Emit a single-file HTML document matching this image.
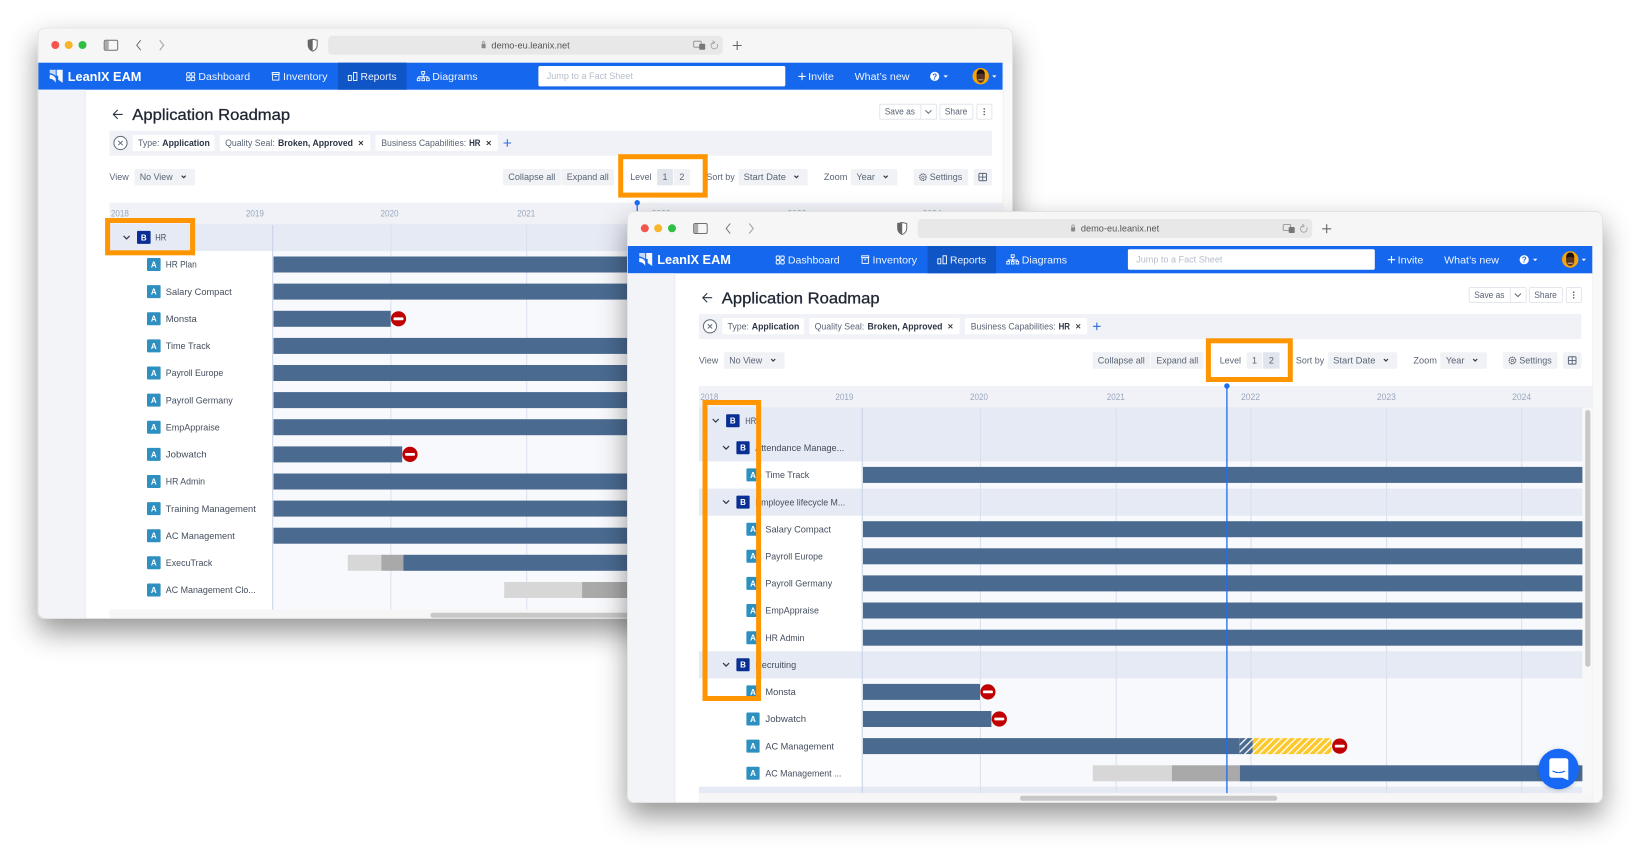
<!DOCTYPE html>
<html lang="en">
<head>
<meta charset="utf-8">
<title>Application Roadmap</title>
<style>
html,body{margin:0;padding:0;background:#fff;width:1640px;height:855px;overflow:hidden}
svg{display:block;filter:blur(.35px)}
text{font-family:"Liberation Sans",sans-serif;font-size:9.3px;fill:#4a5464}
.nav{fill:#fff;font-size:10px;opacity:.93}
.logo{fill:#fff;font-size:13px;font-weight:bold}
.ttl{fill:#1f2733;stroke:#1f2733;stroke-width:.3px;font-size:15.5px}
.b{font-weight:bold;fill:#2c3545;font-size:9px}
.s{fill:#5a6475;font-size:9px}
.yr{fill:#9aa7bd;font-size:9px}
.url{fill:#555;font-size:9.5px}
.ph{fill:#b5bdcb;font-size:9px}
.ic{fill:#fff;font-size:8px;font-weight:bold;text-anchor:middle}
.lb{fill:#444e5e;font-size:9.2px}
.ch{fill:none;stroke:#2d3748;stroke-width:1.2}
.wi{fill:none;stroke:#fff;stroke-width:.9}
.tb{fill:none;stroke:#6f6f6f;stroke-width:1}
</style>
</head>
<body>
<svg width="1640" height="855" viewBox="0 0 1640 855" xmlns="http://www.w3.org/2000/svg">
<defs>
<filter id="sh" x="-10%" y="-10%" width="120%" height="125%"><feDropShadow dx="0" dy="13" stdDeviation="14" flood-color="#000" flood-opacity=".42"/></filter>
<filter id="sh2" x="-30%" y="-30%" width="160%" height="160%"><feDropShadow dx="0" dy="1" stdDeviation="2" flood-color="#000" flood-opacity=".2"/></filter>
<clipPath id="c1"><rect width="975" height="591" rx="7"/></clipPath>
<clipPath id="c2"><rect width="975.5" height="592" rx="7"/></clipPath>
<pattern id="hy" width="5" height="5" patternUnits="userSpaceOnUse" patternTransform="rotate(45)"><rect width="5" height="5" fill="#fbc92e"/><rect width="1.3" height="5" fill="#fff"/></pattern>
<pattern id="hb" width="5" height="5" patternUnits="userSpaceOnUse" patternTransform="rotate(45)"><rect width="5" height="5" fill="#4a6a90"/><rect width="1.3" height="5" fill="#fff"/></pattern>
</defs>

<!-- WINDOW 1 -->
<g transform="translate(37.7,27.7)">
<rect width="975" height="591" rx="7" fill="#fff" filter="url(#sh)"/>
<g clip-path="url(#c1)">
<rect width="975" height="591" fill="#fff"/>
<rect width="975" height="35" fill="#f6f6f6"/>
<circle cx="17.6" cy="17.3" r="4" fill="#f4564e"/><circle cx="31" cy="17.3" r="4" fill="#fbb52d"/><circle cx="44.8" cy="17.3" r="4" fill="#2fc043"/>
<rect x="66.5" y="12.5" width="13.5" height="10" rx="1.5" class="tb"/><rect x="67" y="13" width="4" height="9" fill="#aaa"/>
<path d="M103,12.5 L99,17.5 L103,22.5" class="tb" stroke-width="1.2"/><path d="M122,12.5 L126,17.5 L122,22.5" fill="none" stroke="#aaa" stroke-width="1.2"/>
<path d="M270.5,12.5 L275,11.5 L279.5,12.5 L279.5,18 Q279,22 275,23.5 Q271,22 270.5,18 Z" fill="#fff" stroke="#666"/><path d="M270.5,12.5 L275,11.5 L275,23.5 Q271,22 270.5,18 Z" fill="#666"/>
<rect x="290.5" y="8" width="394.5" height="19" rx="4" fill="#e8e8e8"/>
<rect x="443.9" y="16.2" width="4" height="4.3" rx=".6" fill="#888"/><path d="M444.7,16.2 v-1.2 a1.2,1.2 0 0 1 2.4,0 v1.2" fill="none" stroke="#888" stroke-width=".7"/>
<text class="url" x="453.7" y="20.6" textLength="78.3" lengthAdjust="spacingAndGlyphs">demo-eu.leanix.net</text>
<rect x="656" y="13.5" width="7.5" height="6" rx="1" fill="#e8e8e8" stroke="#888" stroke-width=".8"/><rect x="661.5" y="16" width="6" height="6" rx="1" fill="#777"/>
<path d="M679.5,16.3 A3.3,3.3 0 1 1 675.5,14.8 M675,13 L677,14.8 L675,16.3" fill="none" stroke="#999" stroke-width=".8"/>
<path d="M699.5,13.3 v9 M695,17.8 h9" stroke="#666" stroke-width="1.1"/>

<rect y="35" width="965" height="27" fill="#1567ee"/>
<rect x="300.3" y="35" width="68.6" height="27" fill="#0f55c5"/>
<path d="M12,42 H18 V48 Q14.5,45.5 12,45.5 Z" fill="#fff" opacity=".75"/><path d="M19,42 H25 V55 L20.5,52 V48 H19 Z" fill="#fff" opacity=".95"/><path d="M12,47 Q16,47 18,50.5 V55 Q16,51 12,51 Z" fill="#fff"/>
<text class="logo" x="30" y="53.2" textLength="73.7" lengthAdjust="spacingAndGlyphs">LeanIX EAM</text>
<g class="wi"><rect x="149" y="45" width="3.4" height="3.4" rx=".6"/><rect x="153.6" y="45" width="3.4" height="3.4" rx=".6"/><rect x="149" y="49.6" width="3.4" height="3.4" rx=".6"/><rect x="153.6" y="49.6" width="3.4" height="3.4" rx=".6"/>
<rect x="234.5" y="44.8" width="7" height="1.8"/><rect x="234.9" y="46.8" width="6.3" height="5.6"/><path d="M237,48.8 h2"/>
<rect x="310.6" y="47.8" width="3" height="5"/><rect x="315.8" y="44.8" width="3.4" height="8"/>
<rect x="384" y="43.8" width="3" height="2.6"/><path d="M385.5,46.4 V49 M381,50.3 V49 H390.2 V50.3 M385.5,49 V50.3"/><rect x="379.6" y="50.4" width="2.6" height="2.6"/><rect x="384.2" y="50.4" width="2.6" height="2.6"/><rect x="388.9" y="50.4" width="2.6" height="2.6"/></g>
<text class="nav" x="160.7" y="52.3" textLength="51.7" lengthAdjust="spacingAndGlyphs">Dashboard</text>
<text class="nav" x="245.3" y="52.3" textLength="44.6" lengthAdjust="spacingAndGlyphs">Inventory</text>
<text class="nav" x="322.8" y="52.3" textLength="36.1" lengthAdjust="spacingAndGlyphs">Reports</text>
<text class="nav" x="394.6" y="52.3" textLength="45.3" lengthAdjust="spacingAndGlyphs">Diagrams</text>
<rect x="500.7" y="38.3" width="246.9" height="20.4" rx="1.5" fill="#fff"/>
<text class="ph" x="509" y="51.3" textLength="86.2" lengthAdjust="spacingAndGlyphs">Jump to a Fact Sheet</text>
<path d="M764.3,45 v7.4 M760.6,48.7 h7.4" stroke="#fff" stroke-width="1.1"/>
<text class="nav" x="770.4" y="52.3" textLength="25.8" lengthAdjust="spacingAndGlyphs">Invite</text>
<text class="nav" x="816.9" y="52.3" textLength="54.9" lengthAdjust="spacingAndGlyphs">What’s new</text>
<circle cx="897" cy="48.7" r="4.6" fill="#fff"/><text x="897" y="51.7" style="font-size:8px;font-weight:bold;fill:#1567ee;text-anchor:middle">?</text>
<path d="M905.8,47.7 h4.4 l-2.2,2.4 z" fill="#fff"/>
<circle cx="943" cy="48.5" r="8.2" fill="#f5a50a"/><ellipse cx="943" cy="49" rx="4.2" ry="6" fill="#5a3320"/><path d="M938.8,47 Q939,41.5 943,41.5 Q947,41.5 947.2,47 Q943,44.5 938.8,47 Z" fill="#1d120d"/><path d="M940.5,52.2 h5" stroke="#e8d6c8" stroke-width=".8"/>
<path d="M954.4,47.7 h4.4 l-2.2,2.4 z" fill="#fff"/>

<rect y="62" width="47" height="529" fill="#f2f4f8"/><rect x="47" y="62" width="1" height="529" fill="#e6e9f0"/>
<rect x="965" y="35" width="10" height="556" fill="#f9f9f9"/><rect x="965" y="35" width=".7" height="556" fill="#eee"/>

<path d="M85,86.7 H76 M80,82.2 L75.6,86.7 L80,91.2" fill="none" stroke="#2d3644" stroke-width="1.1"/>
<text class="ttl" x="94.6" y="92.3" textLength="157.8" lengthAdjust="spacingAndGlyphs">Application Roadmap</text>
<rect x="842" y="76.5" width="57" height="15" rx="1.5" fill="#fff" stroke="#e3e6ec"/><path d="M883.1,76.5 v15" stroke="#e3e6ec"/>
<text class="s" x="847" y="87" textLength="30.3" lengthAdjust="spacingAndGlyphs">Save as</text>
<path d="M887.7,82.6 L890.7,85.6 L893.7,82.6" fill="none" stroke="#5a6475"/>
<rect x="902.2" y="76.5" width="33" height="15" rx="1.5" fill="#fff" stroke="#e3e6ec"/>
<text class="s" x="907" y="87" textLength="22.7" lengthAdjust="spacingAndGlyphs">Share</text>
<rect x="939.2" y="76.5" width="15" height="15" rx="1.5" fill="#fff" stroke="#e3e6ec"/>
<circle cx="946.5" cy="81.2" r=".8" fill="#555"/><circle cx="946.5" cy="84" r=".8" fill="#555"/><circle cx="946.5" cy="86.8" r=".8" fill="#555"/>

<rect x="71.7" y="103" width="882.5" height="25" rx="1" fill="#f0f2f7"/>
<circle cx="82.8" cy="115.3" r="6.6" fill="#fff" stroke="#5f6b7c"/><path d="M80.6,113.1 l4.4,4.4 M85,113.1 l-4.4,4.4" stroke="#5f6b7c"/>
<rect x="95" y="107.3" width="81.7" height="16" rx="1" fill="#fff"/>
<text class="s" x="100.3" y="118.5" textLength="21.5" lengthAdjust="spacingAndGlyphs">Type:</text>
<text class="b" x="124.6" y="118.5" textLength="47.5" lengthAdjust="spacingAndGlyphs">Application</text>
<rect x="182.1" y="107.3" width="150.3" height="16" rx="1" fill="#fff"/>
<text class="s" x="187.4" y="118.5" textLength="49.7" lengthAdjust="spacingAndGlyphs">Quality Seal:</text>
<text class="b" x="240.3" y="118.5" textLength="75" lengthAdjust="spacingAndGlyphs">Broken, Approved</text>
<path d="M321.2,113.3 l4,4 M325.2,113.3 l-4,4" stroke="#333" stroke-width="1"/>
<rect x="337.8" y="107.3" width="122.2" height="16" rx="1" fill="#fff"/>
<text class="s" x="343.5" y="118.5" textLength="85" lengthAdjust="spacingAndGlyphs">Business Capabilities:</text>
<text class="b" x="431.4" y="118.5" textLength="11.4" lengthAdjust="spacingAndGlyphs">HR</text>
<path d="M449,113.3 l4,4 M453,113.3 l-4,4" stroke="#333" stroke-width="1"/>
<path d="M469.6,111.5 v7.6 M465.8,115.3 h7.6" stroke="#2a6fe0" stroke-width="1.1"/>

<text class="s" x="71.7" y="152.5" textLength="19.3" lengthAdjust="spacingAndGlyphs">View</text>
<rect x="96.7" y="141.3" width="60.7" height="16.4" rx="1.5" fill="#f0f2f5"/>
<text class="s" x="102.1" y="152.5" textLength="32.8" lengthAdjust="spacingAndGlyphs">No View</text>
<path d="M144,148 L146,150 L148,148" class="ch"/>
<rect x="465.3" y="141.3" width="57.8" height="16.4" rx="1" fill="#f0f2f5"/><rect x="523.8" y="141.3" width="52.4" height="16.4" rx="1" fill="#f0f2f5"/>
<text class="s" x="470.6" y="152.5" textLength="47" lengthAdjust="spacingAndGlyphs">Collapse all</text>
<text class="s" x="529" y="152.5" textLength="42.1" lengthAdjust="spacingAndGlyphs">Expand all</text>
<text class="s" x="668.7" y="152.5" textLength="28.3" lengthAdjust="spacingAndGlyphs">Sort by</text>
<rect x="700.7" y="141.3" width="69.3" height="16.4" rx="1.5" fill="#f0f2f5"/>
<text class="s" x="705.9" y="152.5" textLength="42.4" lengthAdjust="spacingAndGlyphs">Start Date</text>
<path d="M756.7,148 L758.7,150 L760.7,148" class="ch"/>
<text class="s" x="786.2" y="152.5" textLength="23.5" lengthAdjust="spacingAndGlyphs">Zoom</text>
<rect x="813.1" y="141.3" width="46.6" height="16.4" rx="1.5" fill="#f0f2f5"/>
<text class="s" x="818.7" y="152.5" textLength="18.6" lengthAdjust="spacingAndGlyphs">Year</text>
<path d="M846,148 L848,150 L850,148" class="ch"/>
<rect x="875.9" y="141.3" width="54.5" height="16.4" rx="1.5" fill="#f0f2f5"/>
<circle cx="885.2" cy="149.5" r="3.2" fill="none" stroke="#5a6475" stroke-width="1.3" stroke-dasharray="1.2 .6"/><circle cx="885.2" cy="149.5" r="1.2" fill="none" stroke="#5a6475" stroke-width=".6"/>
<text class="s" x="892.1" y="152.5" textLength="32.4" lengthAdjust="spacingAndGlyphs">Settings</text>
<rect x="935.9" y="141.3" width="18.3" height="16.4" rx="1.5" fill="#f0f2f5"/>
<rect x="941.2" y="145.7" width="7.6" height="7.4" rx="1" fill="none" stroke="#5a6475"/><path d="M945,145.7 v7.4 M941.2,149.4 h7.6" stroke="#5a6475" stroke-width=".9"/>

<rect x="71.7" y="175" width="893" height="22.3" fill="#f0f2f7"/>
<text class="yr" x="73.2" y="189" textLength="18" lengthAdjust="spacingAndGlyphs">2018</text>
<text class="yr" x="208.2" y="189" textLength="18" lengthAdjust="spacingAndGlyphs">2019</text>
<text class="yr" x="342.8" y="189" textLength="18" lengthAdjust="spacingAndGlyphs">2020</text>
<text class="yr" x="479.6" y="189" textLength="18" lengthAdjust="spacingAndGlyphs">2021</text>
<text class="yr" x="613.8" y="189" textLength="19" lengthAdjust="spacingAndGlyphs">2022</text>
<text class="yr" x="749.7" y="189" textLength="19" lengthAdjust="spacingAndGlyphs">2023</text>
<text class="yr" x="884.9" y="189" textLength="19" lengthAdjust="spacingAndGlyphs">2024</text>

<rect x="235" y="197.3" width="720" height="384.5" fill="#f8f9fc"/>
<rect x="71.7" y="196.2" width="883.3" height="27.1" fill="#e6eaf4"/>
<path d="M353.2,197.3 V581.8 M489,197.3 V581.8 M623.8,197.3 V581.8 M759.4,197.3 V581.8 M894.5,197.3 V581.8" stroke="#d8e0ed" stroke-width="1"/>
<path d="M235,197.3 V581.8" stroke="#c5d1e4" stroke-width="1"/>
<g fill="#4a6a90">
<rect x="235.8" y="228.8" width="720" height="16"/>
<rect x="235.8" y="255.9" width="720" height="16"/>
<rect x="235.8" y="283.1" width="117.2" height="16"/>
<rect x="235.8" y="310.2" width="720" height="16"/>
<rect x="235.8" y="337.3" width="720" height="16"/>
<rect x="235.8" y="364.4" width="720" height="16"/>
<rect x="235.8" y="391.5" width="720" height="16"/>
<rect x="235.8" y="418.7" width="128.7" height="16"/>
<rect x="235.8" y="445.8" width="720" height="16"/>
<rect x="235.8" y="472.9" width="720" height="16"/>
<rect x="235.8" y="500" width="720" height="16"/>
<rect x="365.5" y="527.1" width="590" height="16"/>
</g>
<rect x="310.1" y="527.1" width="33.5" height="16" fill="#d7d7d7"/><rect x="343.6" y="527.1" width="21.9" height="16" fill="#a9a9a9"/>
<rect x="466.5" y="554.3" width="77.9" height="16" fill="#d7d7d7"/><rect x="544.4" y="554.3" width="68" height="16" fill="#a9a9a9"/>
<circle cx="360.8" cy="291.1" r="7.6" fill="#c00000"/><rect x="355.8" y="289.7" width="10" height="2.8" rx="1" fill="#fff"/>
<circle cx="372.3" cy="426.7" r="7.6" fill="#c00000"/><rect x="367.3" y="425.3" width="10" height="2.8" rx="1" fill="#fff"/>
<path d="M599.5,175 V582" stroke="#1c6ef2" stroke-width="1.3"/><circle cx="599.5" cy="175" r="2.7" fill="#1c6ef2"/>

<path d="M85.9,208.2 L88.9,211.2 L91.9,208.2" class="ch"/>
<rect x="99.3" y="203.2" width="13.6" height="13" rx="1" fill="#0a2f94"/><text class="ic" x="106.1" y="212.6">B</text>
<text class="lb" x="117.6" y="212.9" textLength="11" lengthAdjust="spacingAndGlyphs">HR</text>
<g fill="#2e8fc1">
<rect x="109.3" y="230.3" width="13.6" height="13" rx="1"/><rect x="109.3" y="257.4" width="13.6" height="13" rx="1"/><rect x="109.3" y="284.6" width="13.6" height="13" rx="1"/><rect x="109.3" y="311.7" width="13.6" height="13" rx="1"/><rect x="109.3" y="338.8" width="13.6" height="13" rx="1"/><rect x="109.3" y="365.9" width="13.6" height="13" rx="1"/><rect x="109.3" y="393" width="13.6" height="13" rx="1"/><rect x="109.3" y="420.2" width="13.6" height="13" rx="1"/><rect x="109.3" y="447.3" width="13.6" height="13" rx="1"/><rect x="109.3" y="474.4" width="13.6" height="13" rx="1"/><rect x="109.3" y="501.5" width="13.6" height="13" rx="1"/><rect x="109.3" y="528.6" width="13.6" height="13" rx="1"/><rect x="109.3" y="555.8" width="13.6" height="13" rx="1"/>
</g>
<text class="ic" x="116.1" y="239.7">A</text><text class="ic" x="116.1" y="266.8">A</text><text class="ic" x="116.1" y="294">A</text><text class="ic" x="116.1" y="321.1">A</text><text class="ic" x="116.1" y="348.2">A</text><text class="ic" x="116.1" y="375.3">A</text><text class="ic" x="116.1" y="402.4">A</text><text class="ic" x="116.1" y="429.6">A</text><text class="ic" x="116.1" y="456.7">A</text><text class="ic" x="116.1" y="483.8">A</text><text class="ic" x="116.1" y="510.9">A</text><text class="ic" x="116.1" y="538">A</text><text class="ic" x="116.1" y="565.2">A</text>
<text class="lb" x="128.1" y="240" textLength="30.9" lengthAdjust="spacingAndGlyphs">HR Plan</text>
<text class="lb" x="128.1" y="267.1" textLength="65.9" lengthAdjust="spacingAndGlyphs">Salary Compact</text>
<text class="lb" x="128.1" y="294.3" textLength="30.9" lengthAdjust="spacingAndGlyphs">Monsta</text>
<text class="lb" x="128.1" y="321.4" textLength="44.5" lengthAdjust="spacingAndGlyphs">Time Track</text>
<text class="lb" x="128.1" y="348.5" textLength="57.5" lengthAdjust="spacingAndGlyphs">Payroll Europe</text>
<text class="lb" x="128.1" y="375.6" textLength="67" lengthAdjust="spacingAndGlyphs">Payroll Germany</text>
<text class="lb" x="128.1" y="402.7" textLength="53.9" lengthAdjust="spacingAndGlyphs">EmpAppraise</text>
<text class="lb" x="128.1" y="429.9" textLength="40.8" lengthAdjust="spacingAndGlyphs">Jobwatch</text>
<text class="lb" x="128.1" y="457" textLength="39.2" lengthAdjust="spacingAndGlyphs">HR Admin</text>
<text class="lb" x="128.1" y="484.1" textLength="90" lengthAdjust="spacingAndGlyphs">Training Management</text>
<text class="lb" x="128.1" y="511.2" textLength="69" lengthAdjust="spacingAndGlyphs">AC Management</text>
<text class="lb" x="128.1" y="538.3" textLength="46.5" lengthAdjust="spacingAndGlyphs">ExecuTrack</text>
<text class="lb" x="128.1" y="565.5" textLength="90" lengthAdjust="spacingAndGlyphs">AC Management Clo...</text>
<rect x="71.7" y="581.8" width="893" height="9.2" fill="#f6f6f6"/>
<rect x="392.7" y="585" width="300" height="5" rx="2.5" fill="#c8c8c8"/>

<rect x="583" y="129" width="84.5" height="38.4" fill="#fff" stroke="#ff9500" stroke-width="5"/>
<text class="s" x="592.5" y="152.5" textLength="21.3" lengthAdjust="spacingAndGlyphs">Level</text>
<rect x="619.4" y="141.3" width="15.8" height="16.4" rx="1" fill="#e1e5ec"/><rect x="635.9" y="141.3" width="16.5" height="16.4" rx="1" fill="#f0f2f5"/>
<text class="s" x="627.3" y="152.5" style="text-anchor:middle">1</text><text class="s" x="644.2" y="152.5" style="text-anchor:middle">2</text>
<rect x="69.9" y="192.8" width="85" height="32.3" fill="none" stroke="#ff9500" stroke-width="5"/>
</g>
<rect x=".35" y=".35" width="974.3" height="590.3" rx="7" fill="none" stroke="#dcdcdc" stroke-width=".7"/>
</g>

<!-- WINDOW 2 -->
<g transform="translate(627.2,211)">
<rect width="975.5" height="592" rx="7" fill="#fff" filter="url(#sh)"/>
<g clip-path="url(#c2)">
<rect width="975.5" height="592" fill="#fff"/>
<rect width="975.5" height="35" fill="#f6f6f6"/>
<circle cx="17.6" cy="17.3" r="4" fill="#f4564e"/><circle cx="31" cy="17.3" r="4" fill="#fbb52d"/><circle cx="44.8" cy="17.3" r="4" fill="#2fc043"/>
<rect x="66.5" y="12.5" width="13.5" height="10" rx="1.5" class="tb"/><rect x="67" y="13" width="4" height="9" fill="#aaa"/>
<path d="M103,12.5 L99,17.5 L103,22.5" class="tb" stroke-width="1.2"/><path d="M122,12.5 L126,17.5 L122,22.5" fill="none" stroke="#aaa" stroke-width="1.2"/>
<path d="M270.5,12.5 L275,11.5 L279.5,12.5 L279.5,18 Q279,22 275,23.5 Q271,22 270.5,18 Z" fill="#fff" stroke="#666"/><path d="M270.5,12.5 L275,11.5 L275,23.5 Q271,22 270.5,18 Z" fill="#666"/>
<rect x="290.5" y="8" width="394.5" height="19" rx="4" fill="#e8e8e8"/>
<rect x="443.9" y="16.2" width="4" height="4.3" rx=".6" fill="#888"/><path d="M444.7,16.2 v-1.2 a1.2,1.2 0 0 1 2.4,0 v1.2" fill="none" stroke="#888" stroke-width=".7"/>
<text class="url" x="453.7" y="20.6" textLength="78.3" lengthAdjust="spacingAndGlyphs">demo-eu.leanix.net</text>
<rect x="656" y="13.5" width="7.5" height="6" rx="1" fill="#e8e8e8" stroke="#888" stroke-width=".8"/><rect x="661.5" y="16" width="6" height="6" rx="1" fill="#777"/>
<path d="M679.5,16.3 A3.3,3.3 0 1 1 675.5,14.8 M675,13 L677,14.8 L675,16.3" fill="none" stroke="#999" stroke-width=".8"/>
<path d="M699.5,13.3 v9 M695,17.8 h9" stroke="#666" stroke-width="1.1"/>

<rect y="35" width="965.2" height="27.3" fill="#1567ee"/>
<rect x="300.3" y="35" width="68.6" height="27.3" fill="#0f55c5"/>
<path d="M12,42 H18 V48 Q14.5,45.5 12,45.5 Z" fill="#fff" opacity=".75"/><path d="M19,42 H25 V55 L20.5,52 V48 H19 Z" fill="#fff" opacity=".95"/><path d="M12,47 Q16,47 18,50.5 V55 Q16,51 12,51 Z" fill="#fff"/>
<text class="logo" x="30" y="53.2" textLength="73.7" lengthAdjust="spacingAndGlyphs">LeanIX EAM</text>
<g class="wi"><rect x="149" y="45" width="3.4" height="3.4" rx=".6"/><rect x="153.6" y="45" width="3.4" height="3.4" rx=".6"/><rect x="149" y="49.6" width="3.4" height="3.4" rx=".6"/><rect x="153.6" y="49.6" width="3.4" height="3.4" rx=".6"/>
<rect x="234.5" y="44.8" width="7" height="1.8"/><rect x="234.9" y="46.8" width="6.3" height="5.6"/><path d="M237,48.8 h2"/>
<rect x="310.6" y="47.8" width="3" height="5"/><rect x="315.8" y="44.8" width="3.4" height="8"/>
<rect x="384" y="43.8" width="3" height="2.6"/><path d="M385.5,46.4 V49 M381,50.3 V49 H390.2 V50.3 M385.5,49 V50.3"/><rect x="379.6" y="50.4" width="2.6" height="2.6"/><rect x="384.2" y="50.4" width="2.6" height="2.6"/><rect x="388.9" y="50.4" width="2.6" height="2.6"/></g>
<text class="nav" x="160.7" y="52.3" textLength="51.7" lengthAdjust="spacingAndGlyphs">Dashboard</text>
<text class="nav" x="245.3" y="52.3" textLength="44.6" lengthAdjust="spacingAndGlyphs">Inventory</text>
<text class="nav" x="322.8" y="52.3" textLength="36.1" lengthAdjust="spacingAndGlyphs">Reports</text>
<text class="nav" x="394.6" y="52.3" textLength="45.3" lengthAdjust="spacingAndGlyphs">Diagrams</text>
<rect x="500.7" y="38.3" width="246.9" height="20.4" rx="1.5" fill="#fff"/>
<text class="ph" x="509" y="51.3" textLength="86.2" lengthAdjust="spacingAndGlyphs">Jump to a Fact Sheet</text>
<path d="M764.3,45 v7.4 M760.6,48.7 h7.4" stroke="#fff" stroke-width="1.1"/>
<text class="nav" x="770.4" y="52.3" textLength="25.8" lengthAdjust="spacingAndGlyphs">Invite</text>
<text class="nav" x="816.9" y="52.3" textLength="54.9" lengthAdjust="spacingAndGlyphs">What’s new</text>
<circle cx="897" cy="48.7" r="4.6" fill="#fff"/><text x="897" y="51.7" style="font-size:8px;font-weight:bold;fill:#1567ee;text-anchor:middle">?</text>
<path d="M905.8,47.7 h4.4 l-2.2,2.4 z" fill="#fff"/>
<circle cx="943" cy="48.5" r="8.2" fill="#f5a50a"/><ellipse cx="943" cy="49" rx="4.2" ry="6" fill="#5a3320"/><path d="M938.8,47 Q939,41.5 943,41.5 Q947,41.5 947.2,47 Q943,44.5 938.8,47 Z" fill="#1d120d"/><path d="M940.5,52.2 h5" stroke="#e8d6c8" stroke-width=".8"/>
<path d="M954.4,47.7 h4.4 l-2.2,2.4 z" fill="#fff"/>

<rect y="62.3" width="47" height="530" fill="#f2f4f8"/><rect x="47" y="62.3" width="1" height="530" fill="#e6e9f0"/>
<rect x="965.2" y="35" width="10.3" height="557" fill="#f9f9f9"/><rect x="965.2" y="35" width=".7" height="557" fill="#eee"/>

<path d="M85,86.7 H76 M80,82.2 L75.6,86.7 L80,91.2" fill="none" stroke="#2d3644" stroke-width="1.1"/>
<text class="ttl" x="94.6" y="92.3" textLength="157.8" lengthAdjust="spacingAndGlyphs">Application Roadmap</text>
<rect x="842" y="76.5" width="57" height="15" rx="1.5" fill="#fff" stroke="#e3e6ec"/><path d="M883.1,76.5 v15" stroke="#e3e6ec"/>
<text class="s" x="847" y="87" textLength="30.3" lengthAdjust="spacingAndGlyphs">Save as</text>
<path d="M887.7,82.6 L890.7,85.6 L893.7,82.6" fill="none" stroke="#5a6475"/>
<rect x="902.2" y="76.5" width="33" height="15" rx="1.5" fill="#fff" stroke="#e3e6ec"/>
<text class="s" x="907" y="87" textLength="22.7" lengthAdjust="spacingAndGlyphs">Share</text>
<rect x="939.2" y="76.5" width="15" height="15" rx="1.5" fill="#fff" stroke="#e3e6ec"/>
<circle cx="946.5" cy="81.2" r=".8" fill="#555"/><circle cx="946.5" cy="84" r=".8" fill="#555"/><circle cx="946.5" cy="86.8" r=".8" fill="#555"/>

<rect x="71.7" y="103" width="882.5" height="25" rx="1" fill="#f0f2f7"/>
<circle cx="82.8" cy="115.3" r="6.6" fill="#fff" stroke="#5f6b7c"/><path d="M80.6,113.1 l4.4,4.4 M85,113.1 l-4.4,4.4" stroke="#5f6b7c"/>
<rect x="95" y="107.3" width="81.7" height="16" rx="1" fill="#fff"/>
<text class="s" x="100.3" y="118.5" textLength="21.5" lengthAdjust="spacingAndGlyphs">Type:</text>
<text class="b" x="124.6" y="118.5" textLength="47.5" lengthAdjust="spacingAndGlyphs">Application</text>
<rect x="182.1" y="107.3" width="150.3" height="16" rx="1" fill="#fff"/>
<text class="s" x="187.4" y="118.5" textLength="49.7" lengthAdjust="spacingAndGlyphs">Quality Seal:</text>
<text class="b" x="240.3" y="118.5" textLength="75" lengthAdjust="spacingAndGlyphs">Broken, Approved</text>
<path d="M321.2,113.3 l4,4 M325.2,113.3 l-4,4" stroke="#333" stroke-width="1"/>
<rect x="337.8" y="107.3" width="122.2" height="16" rx="1" fill="#fff"/>
<text class="s" x="343.5" y="118.5" textLength="85" lengthAdjust="spacingAndGlyphs">Business Capabilities:</text>
<text class="b" x="431.4" y="118.5" textLength="11.4" lengthAdjust="spacingAndGlyphs">HR</text>
<path d="M449,113.3 l4,4 M453,113.3 l-4,4" stroke="#333" stroke-width="1"/>
<path d="M469.6,111.5 v7.6 M465.8,115.3 h7.6" stroke="#2a6fe0" stroke-width="1.1"/>

<text class="s" x="71.7" y="152.5" textLength="19.3" lengthAdjust="spacingAndGlyphs">View</text>
<rect x="96.7" y="141.3" width="60.7" height="16.4" rx="1.5" fill="#f0f2f5"/>
<text class="s" x="102.1" y="152.5" textLength="32.8" lengthAdjust="spacingAndGlyphs">No View</text>
<path d="M144,148 L146,150 L148,148" class="ch"/>
<rect x="465.3" y="141.3" width="57.8" height="16.4" rx="1" fill="#f0f2f5"/><rect x="523.8" y="141.3" width="52.4" height="16.4" rx="1" fill="#f0f2f5"/>
<text class="s" x="470.6" y="152.5" textLength="47" lengthAdjust="spacingAndGlyphs">Collapse all</text>
<text class="s" x="529" y="152.5" textLength="42.1" lengthAdjust="spacingAndGlyphs">Expand all</text>
<text class="s" x="668.7" y="152.5" textLength="28.3" lengthAdjust="spacingAndGlyphs">Sort by</text>
<rect x="700.7" y="141.3" width="69.3" height="16.4" rx="1.5" fill="#f0f2f5"/>
<text class="s" x="705.9" y="152.5" textLength="42.4" lengthAdjust="spacingAndGlyphs">Start Date</text>
<path d="M756.7,148 L758.7,150 L760.7,148" class="ch"/>
<text class="s" x="786.2" y="152.5" textLength="23.5" lengthAdjust="spacingAndGlyphs">Zoom</text>
<rect x="813.1" y="141.3" width="46.6" height="16.4" rx="1.5" fill="#f0f2f5"/>
<text class="s" x="818.7" y="152.5" textLength="18.6" lengthAdjust="spacingAndGlyphs">Year</text>
<path d="M846,148 L848,150 L850,148" class="ch"/>
<rect x="875.9" y="141.3" width="54.5" height="16.4" rx="1.5" fill="#f0f2f5"/>
<circle cx="885.2" cy="149.5" r="3.2" fill="none" stroke="#5a6475" stroke-width="1.3" stroke-dasharray="1.2 .6"/><circle cx="885.2" cy="149.5" r="1.2" fill="none" stroke="#5a6475" stroke-width=".6"/>
<text class="s" x="892.1" y="152.5" textLength="32.4" lengthAdjust="spacingAndGlyphs">Settings</text>
<rect x="935.9" y="141.3" width="18.3" height="16.4" rx="1.5" fill="#f0f2f5"/>
<rect x="941.2" y="145.7" width="7.6" height="7.4" rx="1" fill="none" stroke="#5a6475"/><path d="M945,145.7 v7.4 M941.2,149.4 h7.6" stroke="#5a6475" stroke-width=".9"/>

<rect x="71.7" y="175" width="893.5" height="22.3" fill="#f0f2f7"/>
<text class="yr" x="73.2" y="189" textLength="18" lengthAdjust="spacingAndGlyphs">2018</text>
<text class="yr" x="208.2" y="189" textLength="18" lengthAdjust="spacingAndGlyphs">2019</text>
<text class="yr" x="342.8" y="189" textLength="18" lengthAdjust="spacingAndGlyphs">2020</text>
<text class="yr" x="479.6" y="189" textLength="18" lengthAdjust="spacingAndGlyphs">2021</text>
<text class="yr" x="613.8" y="189" textLength="19" lengthAdjust="spacingAndGlyphs">2022</text>
<text class="yr" x="749.7" y="189" textLength="19" lengthAdjust="spacingAndGlyphs">2023</text>
<text class="yr" x="884.9" y="189" textLength="19" lengthAdjust="spacingAndGlyphs">2024</text>

<rect x="235" y="197.3" width="720.2" height="385" fill="#f8f9fc"/>
<g fill="#e6eaf4">
<rect x="71.7" y="196.2" width="883.5" height="27.1"/>
<rect x="71.7" y="223.3" width="883.5" height="27.1"/>
<rect x="71.7" y="277.6" width="883.5" height="27.1"/>
<rect x="71.7" y="440.3" width="883.5" height="27.1"/>
<rect x="71.7" y="575.7" width="883.5" height="6.6"/>
</g>
<path d="M353.2,197.3 V582.3 M489,197.3 V582.3 M623.8,197.3 V582.3 M759.4,197.3 V582.3 M894.5,197.3 V582.3" stroke="#d8e0ed" stroke-width="1"/>
<path d="M235,197.3 V582.3" stroke="#c5d1e4" stroke-width="1"/>
<rect x="955.2" y="197.3" width="10" height="385" fill="#f8f8f8"/>
<rect x="958" y="199" width="5.2" height="256.7" rx="2.6" fill="#c8c8c8"/>
<g fill="#4a6a90">
<rect x="235.8" y="255.9" width="719.4" height="16"/>
<rect x="235.8" y="310.2" width="719.4" height="16"/>
<rect x="235.8" y="337.3" width="719.4" height="16"/>
<rect x="235.8" y="364.4" width="719.4" height="16"/>
<rect x="235.8" y="391.5" width="719.4" height="16"/>
<rect x="235.8" y="418.7" width="719.4" height="16"/>
<rect x="235.8" y="472.9" width="117" height="16"/>
<rect x="235.8" y="500" width="128.4" height="16"/>
<rect x="235.8" y="527.1" width="376.7" height="16"/>
<rect x="612.5" y="554.3" width="342.7" height="16"/>
</g>
<rect x="612.5" y="527.1" width="13.1" height="16" fill="url(#hb)"/>
<rect x="625.6" y="527.1" width="78.6" height="16" fill="url(#hy)"/>
<rect x="465.6" y="554.3" width="79" height="16" fill="#d7d7d7"/><rect x="544.6" y="554.3" width="67.9" height="16" fill="#a9a9a9"/>
<circle cx="360.7" cy="480.9" r="7.6" fill="#c00000"/><rect x="355.7" y="479.5" width="10" height="2.8" rx="1" fill="#fff"/>
<circle cx="372.1" cy="508" r="7.6" fill="#c00000"/><rect x="367.1" y="506.6" width="10" height="2.8" rx="1" fill="#fff"/>
<circle cx="712.5" cy="535.1" r="7.6" fill="#c00000"/><rect x="707.5" y="533.7" width="10" height="2.8" rx="1" fill="#fff"/>
<path d="M599.7,175 V582.3" stroke="#1c6ef2" stroke-width="1.3"/><circle cx="599.7" cy="175" r="2.7" fill="#1c6ef2"/>

<path d="M85.5,208 L88.5,211 L91.5,208" class="ch"/>
<rect x="98.9" y="203.2" width="13.5" height="13" rx="1" fill="#0a2f94"/><text class="ic" x="105.6" y="212.6">B</text>
<text class="lb" x="118.1" y="212.9" textLength="11" lengthAdjust="spacingAndGlyphs">HR</text>
<path d="M95.9,235.1 L98.9,238.1 L101.9,235.1" class="ch"/>
<rect x="109.2" y="230.3" width="13.2" height="13" rx="1" fill="#0a2f94"/><text class="ic" x="115.8" y="239.7">B</text>
<text class="lb" x="128" y="240" textLength="89" lengthAdjust="spacingAndGlyphs">Attendance Manage...</text>
<path d="M95.9,289.4 L98.9,292.4 L101.9,289.4" class="ch"/>
<rect x="109.2" y="284.6" width="13.2" height="13" rx="1" fill="#0a2f94"/><text class="ic" x="115.8" y="294">B</text>
<text class="lb" x="128" y="294.3" textLength="90" lengthAdjust="spacingAndGlyphs">Employee lifecycle M...</text>
<path d="M95.9,452.1 L98.9,455.1 L101.9,452.1" class="ch"/>
<rect x="109.2" y="447.3" width="13.2" height="13" rx="1" fill="#0a2f94"/><text class="ic" x="115.8" y="456.7">B</text>
<text class="lb" x="128" y="457" textLength="41" lengthAdjust="spacingAndGlyphs">Recruiting</text>
<g fill="#2e8fc1">
<rect x="119.2" y="257.4" width="13.2" height="13" rx="1"/><rect x="119.2" y="311.7" width="13.2" height="13" rx="1"/><rect x="119.2" y="338.8" width="13.2" height="13" rx="1"/><rect x="119.2" y="365.9" width="13.2" height="13" rx="1"/><rect x="119.2" y="393" width="13.2" height="13" rx="1"/><rect x="119.2" y="420.2" width="13.2" height="13" rx="1"/><rect x="119.2" y="474.4" width="13.2" height="13" rx="1"/><rect x="119.2" y="501.5" width="13.2" height="13" rx="1"/><rect x="119.2" y="528.6" width="13.2" height="13" rx="1"/><rect x="119.2" y="555.8" width="13.2" height="13" rx="1"/>
</g>
<text class="ic" x="125.8" y="266.8">A</text><text class="ic" x="125.8" y="321.1">A</text><text class="ic" x="125.8" y="348.2">A</text><text class="ic" x="125.8" y="375.3">A</text><text class="ic" x="125.8" y="402.4">A</text><text class="ic" x="125.8" y="429.6">A</text><text class="ic" x="125.8" y="483.8">A</text><text class="ic" x="125.8" y="510.9">A</text><text class="ic" x="125.8" y="538">A</text><text class="ic" x="125.8" y="565.2">A</text>
<text class="lb" x="138.2" y="267.1" textLength="43.9" lengthAdjust="spacingAndGlyphs">Time Track</text>
<text class="lb" x="138.2" y="321.4" textLength="65.7" lengthAdjust="spacingAndGlyphs">Salary Compact</text>
<text class="lb" x="138.2" y="348.5" textLength="57.5" lengthAdjust="spacingAndGlyphs">Payroll Europe</text>
<text class="lb" x="138.2" y="375.6" textLength="66.8" lengthAdjust="spacingAndGlyphs">Payroll Germany</text>
<text class="lb" x="138.2" y="402.7" textLength="53.6" lengthAdjust="spacingAndGlyphs">EmpAppraise</text>
<text class="lb" x="138.2" y="429.9" textLength="39" lengthAdjust="spacingAndGlyphs">HR Admin</text>
<text class="lb" x="138.2" y="484.1" textLength="30.4" lengthAdjust="spacingAndGlyphs">Monsta</text>
<text class="lb" x="138.2" y="511.2" textLength="40.7" lengthAdjust="spacingAndGlyphs">Jobwatch</text>
<text class="lb" x="138.2" y="538.3" textLength="68.6" lengthAdjust="spacingAndGlyphs">AC Management</text>
<text class="lb" x="138.2" y="565.5" textLength="76" lengthAdjust="spacingAndGlyphs">AC Management ...</text>
<rect x="71.7" y="582.3" width="893.5" height="9.7" fill="#f6f6f6"/>
<rect x="392.8" y="584.8" width="257.2" height="5" rx="2.5" fill="#c8c8c8"/>

<rect x="581.2" y="129.8" width="81.9" height="38.7" fill="#fff" stroke="#ff9500" stroke-width="5"/>
<text class="s" x="592.5" y="152.5" textLength="21.3" lengthAdjust="spacingAndGlyphs">Level</text>
<rect x="619.4" y="141.3" width="15.8" height="16.4" rx="1" fill="#f0f2f5"/><rect x="635.9" y="141.3" width="16.5" height="16.4" rx="1" fill="#e1e5ec"/>
<text class="s" x="627.3" y="152.5" style="text-anchor:middle">1</text><text class="s" x="644.2" y="152.5" style="text-anchor:middle">2</text>
<rect x="77.8" y="191.5" width="53.6" height="296" fill="none" stroke="#ff9500" stroke-width="5"/>
</g>
<rect x=".35" y=".35" width="974.8" height="591.3" rx="7" fill="none" stroke="#dcdcdc" stroke-width=".7"/>
</g>

<!-- CHAT BUBBLE -->
<circle cx="1558.6" cy="769" r="20.2" fill="#1567f5" filter="url(#sh2)"/>
<path d="M1552,758.2 H1565.5 Q1568.3,758.2 1568.3,761 V780.3 L1562.5,777.7 H1552 Q1549.3,777.7 1549.3,775 V761 Q1549.3,758.2 1552,758.2 Z" fill="#fff"/>
<path d="M1552.5,771 Q1558.8,774.3 1565,771" fill="none" stroke="#1567f5" stroke-width="1"/>
</svg>
</body>
</html>
